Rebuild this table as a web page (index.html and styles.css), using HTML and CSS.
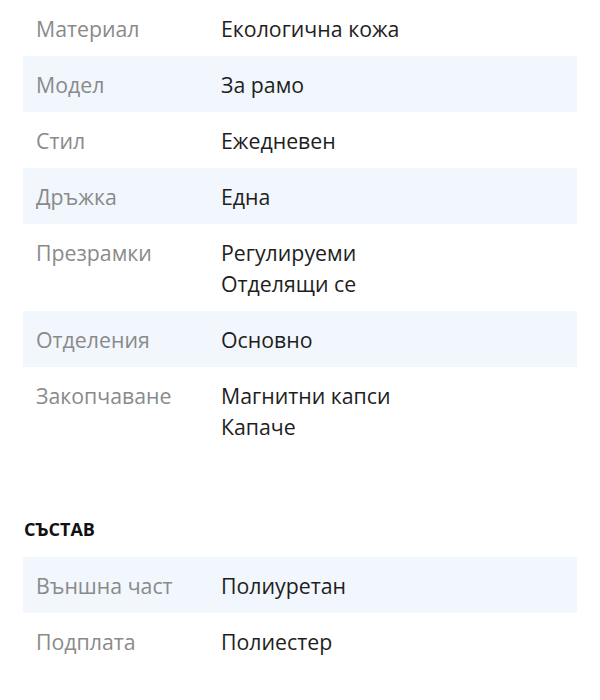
FILE: index.html
```html
<!DOCTYPE html>
<html lang="bg">
<head>
<meta charset="utf-8">
<link rel="stylesheet" href="styles.css">
</head>
<body>
<div class="page">
  <div class="specs">
    <div class="row"><div class="label">Материал</div><div class="value">Екологична кожа</div></div>
    <div class="row alt"><div class="label">Модел</div><div class="value">За рамо</div></div>
    <div class="row"><div class="label">Стил</div><div class="value">Ежедневен</div></div>
    <div class="row alt"><div class="label">Дръжка</div><div class="value">Една</div></div>
    <div class="row"><div class="label">Презрамки</div><div class="value">Регулируеми<br>Отделящи се</div></div>
    <div class="row alt"><div class="label">Отделения</div><div class="value">Основно</div></div>
    <div class="row"><div class="label">Закопчаване</div><div class="value">Магнитни капси<br>Капаче</div></div>
  </div>
  <h3 class="section-title">СЪСТАВ</h3>
  <div class="specs">
    <div class="row alt"><div class="label">Външна част</div><div class="value">Полиуретан</div></div>
    <div class="row"><div class="label">Подплата</div><div class="value">Полиестер</div></div>
  </div>
</div>
</body>
</html>
```
FILE: styles.css
```css
html, body {
  margin: 0;
  padding: 0;
  background: #ffffff;
}
body {
  font-family: "Open Sans", "Noto Sans", sans-serif;
  font-size: 21.3px;
  line-height: 31px;
}
.page {
  padding: 0 23px;
}
.specs {
  display: flex;
  flex-direction: column;
}
.row {
  display: grid;
  grid-template-columns: 185px 1fr;
  padding: 12.5px 13px;
}
.row.alt {
  background: #f1f7fd;
}
.label {
  color: #8a8a8a;
}
.value {
  color: #1e1e1e;
}
.section-title {
  margin: 63px 0 16px 1px;
  font-size: 18px;
  line-height: 24px;
  font-weight: 700;
  color: #111111;
}
```
